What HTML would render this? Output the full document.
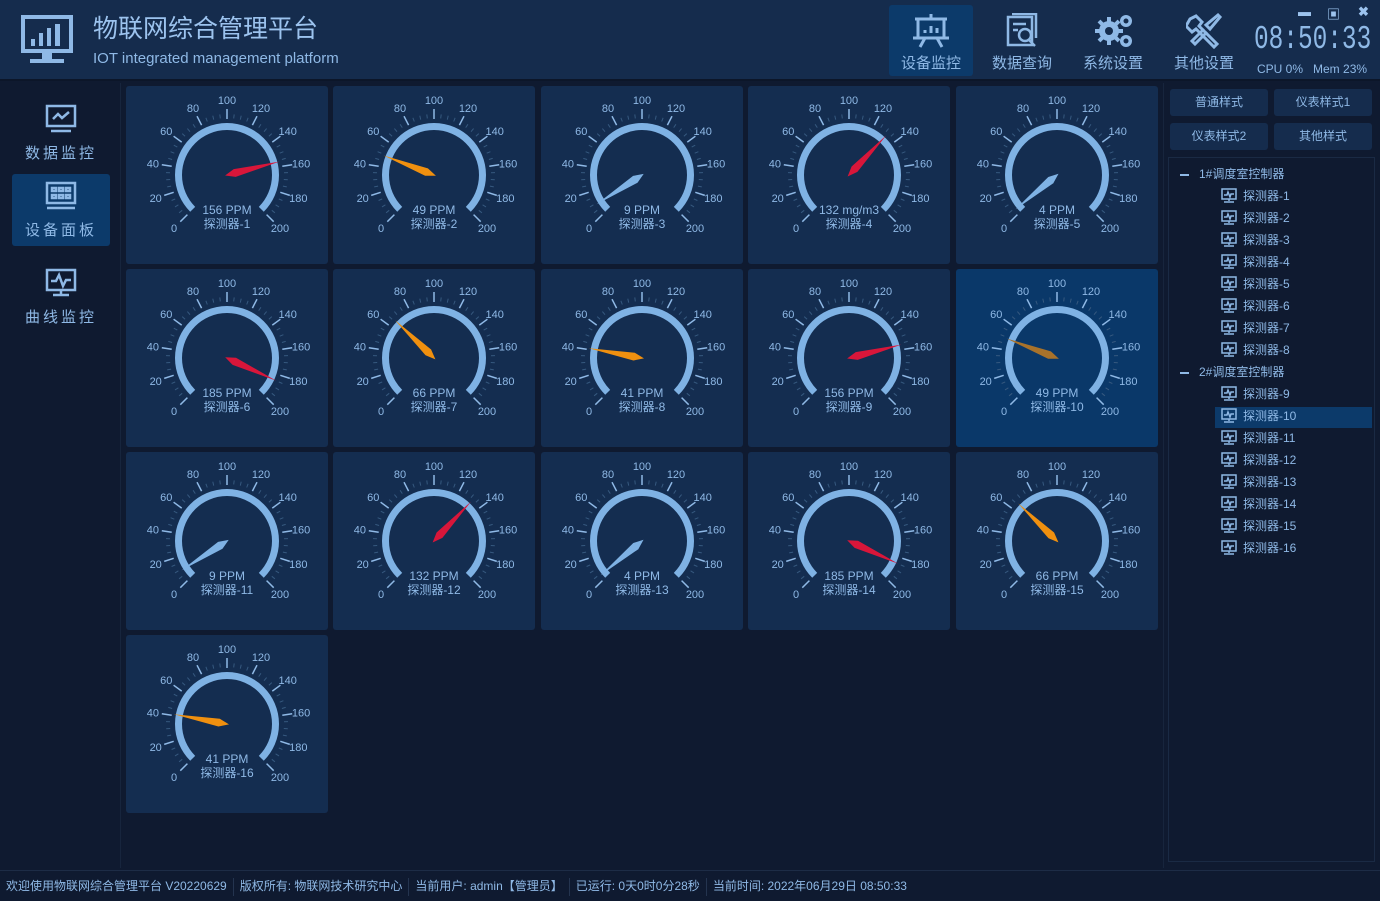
<!DOCTYPE html>
<html><head><meta charset="utf-8"><style>
*{margin:0;padding:0;box-sizing:border-box}
body{width:1380px;height:900px;background:#0f1a30;font-family:"Liberation Sans","Noto Sans CJK SC",sans-serif;color:#8fb9e6;position:relative;overflow:hidden}
.hdr{position:absolute;left:0;top:0;width:1380px;height:81px;background:#152c4d;border-bottom:2px solid #0c1629}
.title{position:absolute;left:93px;top:9px;font-size:25px;color:#9cc3ee}
.sub{position:absolute;left:93px;top:50px;font-size:15px;color:#8fb9e6}
.nb{position:absolute;top:5px;width:84px;height:71px;text-align:center;font-size:15px;color:#8fb9e6}
.nb.sel{background:#0c3a6a;border-radius:3px}
.nb svg{position:absolute;left:24px;top:8px}
.nb span{position:absolute;left:0;right:0;top:47px}
.clock{position:absolute;left:1254px;top:22px;font-family:"Liberation Mono",monospace;font-size:33px;line-height:36px;color:#8fb9e6;transform:scaleX(0.74);transform-origin:0 0;white-space:nowrap}
.cpu{position:absolute;left:1257px;top:62px;font-size:12px;color:#8fb9e6;white-space:nowrap}
.win{position:absolute;top:4px;font-size:13px;color:#9cc3ee;font-weight:bold}
.left{position:absolute;left:0;top:83px;width:121px;height:785px;background:#0f1a30;border-right:1px solid #17253d}
.li{position:absolute;left:12px;width:98px;height:72px;text-align:center;font-size:15px;letter-spacing:3px;color:#8fb9e6}
.li.sel{background:#0c3a6a;border-radius:3px}
.li svg{position:absolute;left:33px;top:6px}
.li span{position:absolute;left:0;right:0;top:45px}
.card{position:absolute;width:202px;height:178px;background:#142d50;border-radius:3px}
.card.sel{background:#0a3869}
.rp{position:absolute;left:1163px;top:83px;width:217px;height:785px;border-left:1px solid #17253d}
.btn{position:absolute;width:98px;height:27px;background:#152c4d;border-radius:3px;font-size:12px;text-align:center;line-height:27px;color:#8fb9e6}
.tree{position:absolute;left:1168px;top:157px;width:207px;height:705px;border:1px solid #1a2a44}
.tn{position:absolute;font-size:12px;color:#8fb9e6;height:20px;line-height:20px}
.status{position:absolute;left:0;top:870px;width:1380px;height:30px;border-top:1px solid #1d2c46;font-size:12px;color:#8fb9e6;line-height:30px;padding-left:6px;white-space:nowrap}
.status i{display:inline-block;width:1px;height:18px;background:#24344f;vertical-align:middle;margin:0 6px}
</style></head><body>
<div class="hdr">
 <svg style="position:absolute;left:21px;top:15px" width="52" height="50" viewBox="0 0 52 50"><rect x="2" y="2" width="48" height="34" fill="none" stroke="#8fb9e6" stroke-width="4"/><rect x="10" y="24" width="4" height="7" fill="#8fb9e6"/><rect x="18" y="18" width="4" height="13" fill="#8fb9e6"/><rect x="26" y="13" width="4" height="18" fill="#8fb9e6"/><rect x="34" y="9" width="5" height="22" fill="#8fb9e6"/><rect x="21" y="38" width="10" height="6" fill="#8fb9e6"/><rect x="9" y="44" width="34" height="4" fill="#8fb9e6"/></svg>
 <div class="title">物联网综合管理平台</div>
 <div class="sub">IOT integrated management platform</div>
 <div class="nb sel" style="left:889px"><svg width="36" height="36" viewBox="0 0 36 36" fill="none" stroke="#8fb9e6" stroke-width="3"><line x1="18" y1="1" x2="18" y2="5"/><line x1="2" y1="6" x2="34" y2="6"/><rect x="5" y="6" width="26" height="19"/><line x1="0" y1="25" x2="36" y2="25"/><line x1="12" y1="25" x2="7" y2="34"/><line x1="24" y1="25" x2="29" y2="34"/><line x1="12" y1="20" x2="12" y2="17"/><line x1="18" y1="20" x2="18" y2="13"/><line x1="24" y1="20" x2="24" y2="15"/></svg><span>设备监控</span></div>
 <div class="nb" style="left:980px"><svg width="36" height="36" viewBox="0 0 36 36" fill="none" stroke="#8fb9e6" stroke-width="2.5"><rect x="4" y="4" width="24" height="28"/><line x1="9" y1="11" x2="22" y2="11"/><line x1="9" y1="17" x2="14" y2="17"/><circle cx="21" cy="22" r="6"/><line x1="25" y1="27" x2="31" y2="33"/><path d="M8 1h24v24"/></svg><span>数据查询</span></div>
 <div class="nb" style="left:1071px"><svg width="40" height="36" viewBox="0 0 40 36"><g fill="#8fb9e6"><circle cx="14" cy="18" r="10"/><circle cx="31" cy="8" r="6"/><circle cx="31" cy="28" r="6"/></g><g stroke="#8fb9e6" stroke-width="4"><line x1="14" y1="4" x2="14" y2="32"/><line x1="0" y1="18" x2="28" y2="18"/><line x1="4" y1="8" x2="24" y2="28"/><line x1="4" y1="28" x2="24" y2="8"/></g><g fill="#152c4d"><circle cx="14" cy="18" r="4"/><circle cx="31" cy="8" r="2.5"/><circle cx="31" cy="28" r="2.5"/></g></svg><span>系统设置</span></div>
 <div class="nb" style="left:1162px"><svg width="36" height="36" viewBox="0 0 36 36" fill="none" stroke="#8fb9e6" stroke-width="3"><path d="M4 6 l6-3 6 6 -3 4 18 18 -3 3 -18-18 -4 3 -6-6z"/><path d="M32 2 l2 2 -10 12 -4-4z"/><path d="M18 16 L6 28 l3 3 12-12"/></svg><span>其他设置</span></div>
 <div class="win" style="left:1298px">▬</div><div class="win" style="left:1327px">▣</div><div class="win" style="left:1358px">✖</div>
 <div class="clock">08:50:33</div>
 <div class="cpu">CPU 0% &nbsp;&nbsp;Mem 23%</div>
</div>
<div class="left">
 <div class="li" style="top:14px"><svg width="32" height="32" viewBox="0 0 32 32" fill="none" stroke="#8fb9e6" stroke-width="2.5"><rect x="2" y="3" width="28" height="20"/><polyline points="8,16 13,11 17,15 24,9"/><line x1="6" y1="28" x2="26" y2="28"/></svg><span>数据监控</span></div>
 <div class="li sel" style="top:91px"><svg width="32" height="32" viewBox="0 0 32 32" fill="none" stroke="#8fb9e6" stroke-width="2.5"><rect x="2" y="3" width="28" height="20"/><rect x="7" y="8" width="4" height="3"/><rect x="14" y="8" width="4" height="3"/><rect x="21" y="8" width="4" height="3"/><rect x="7" y="15" width="4" height="3"/><rect x="14" y="15" width="4" height="3"/><rect x="21" y="15" width="4" height="3"/><line x1="2" y1="28" x2="30" y2="28"/></svg><span>设备面板</span></div>
 <div class="li" style="top:178px"><svg width="32" height="32" viewBox="0 0 32 32" fill="none" stroke="#8fb9e6" stroke-width="2.5"><rect x="2" y="3" width="28" height="20"/><polyline points="6,14 11,14 14,8 18,19 21,13 26,13"/><line x1="16" y1="23" x2="16" y2="27"/><line x1="8" y1="28" x2="24" y2="28"/></svg><span>曲线监控</span></div>
</div>
<div id="cards"></div>
<div class="rp"></div>
<div class="btn" style="left:1170px;top:89px">普通样式</div><div class="btn" style="left:1274px;top:89px">仪表样式1</div>
<div class="btn" style="left:1170px;top:123px">仪表样式2</div><div class="btn" style="left:1274px;top:123px">其他样式</div>
<div class="tree"></div>
<div id="tree"></div>
<div class="status">欢迎使用物联网综合管理平台 V20220629<i></i>版权所有: 物联网技术研究中心<i></i>当前用户: admin【管理员】<i></i>已运行: 0天0时0分28秒<i></i>当前时间: 2022年06月29日 08:50:33</div>
<script>
var vals=[156,49,9,132,4,185,66,41,156,49,9,132,4,185,66,41];
var xs=[126,333,541,748,956],ys=[86,269,452,635];
var h='';
for(var i=0;i<16;i++){
 var x=xs[i%5],y=ys[Math.floor(i/5)],v=vals[i],cx=101,cy=89;
 var sel=i==9;
 var s='<div class="card'+(sel?' sel':'')+'" style="left:'+x+'px;top:'+y+'px"><svg width="202" height="178" font-family="Liberation Sans, Noto Sans CJK SC, sans-serif">';
 function P(r,a){var t=a*Math.PI/180;return [(cx+r*Math.cos(t)).toFixed(1),(cy-r*Math.sin(t)).toFixed(1)];}
 for(var k=0;k<=40;k++){var a=225-270*k/40;var maj=k%4==0;var p1=P(maj?56:57,a),p2=P(maj?66:61,a);
  s+='<line x1="'+p1[0]+'" y1="'+p1[1]+'" x2="'+p2[0]+'" y2="'+p2[1]+'" stroke="'+(maj?'#8fb9e6':'#36597f')+'" stroke-width="'+(maj?1.5:1)+'"/>';
  if(maj){var q=P(75,a);s+='<text x="'+q[0]+'" y="'+(+q[1]+4)+'" font-size="11" fill="#8fb9e6" text-anchor="middle">'+(k*5)+'</text>';}}
 var a0=P(48.5,225),a1=P(48.5,-45);
 s+='<path d="M'+a0[0]+' '+a0[1]+' A48.5 48.5 0 1 1 '+a1[0]+' '+a1[1]+'" fill="none" stroke="#7fb2e4" stroke-width="7"/>';
 var col=v<30?'#7fb2e4':(v<100?(sel?'#a8722a':'#f0900f'):'#d8163a');
 var an=225-270*v/200;var tip=P(54,an),b=P(-2,an);
 var t=an*Math.PI/180,px=Math.sin(t)*4,py=Math.cos(t)*4;var mc=P(8,an);
 s+='<polygon points="'+tip.join(',')+' '+(+mc[0]+px).toFixed(1)+','+(+mc[1]+py).toFixed(1)+' '+b.join(',')+' '+(+mc[0]-px).toFixed(1)+','+(+mc[1]-py).toFixed(1)+'" fill="'+col+'"/>';
 s+='<text x="101" y="128" font-size="12" fill="#8fb9e6" text-anchor="middle">'+v+(i==3?' mg/m3':' PPM')+'</text>';
 s+='<text x="101" y="142" font-size="12" fill="#8fb9e6" text-anchor="middle">探测器-'+(i+1)+'</text>';
 s+='</svg></div>';h+=s;}
document.getElementById('cards').innerHTML=h;
var ic='<svg width="16" height="16" viewBox="0 0 16 16" fill="none" stroke="#8fb9e6" stroke-width="1.5" style="position:absolute;left:-22px;top:2px"><rect x="1" y="1" width="14" height="10"/><polyline points="3,7 6,7 7,4 9,9 10,6 13,6"/><line x1="8" y1="11" x2="8" y2="13"/><line x1="3" y1="14" x2="13" y2="14"/></svg>';
var t='',yy=164;
for(var g=0;g<2;g++){t+='<div class="tn" style="left:1180px;top:'+yy+'px"><b style="display:inline-block;width:9px;height:2px;background:#8fb9e6;vertical-align:middle;margin-right:10px"></b>'+(g+1)+'#调度室控制器</div>';yy+=22;
 for(var j=0;j<8;j++){var n=g*8+j+1;if(n==10)t+='<div style="position:absolute;left:1215px;top:'+(yy+1)+'px;width:157px;height:21px;background:#0c3a6a"></div>';
 t+='<div class="tn" style="left:1243px;top:'+yy+'px">'+ic+'探测器-'+n+'</div>';yy+=22;}}
document.getElementById('tree').innerHTML=t;
</script>
</body></html>
